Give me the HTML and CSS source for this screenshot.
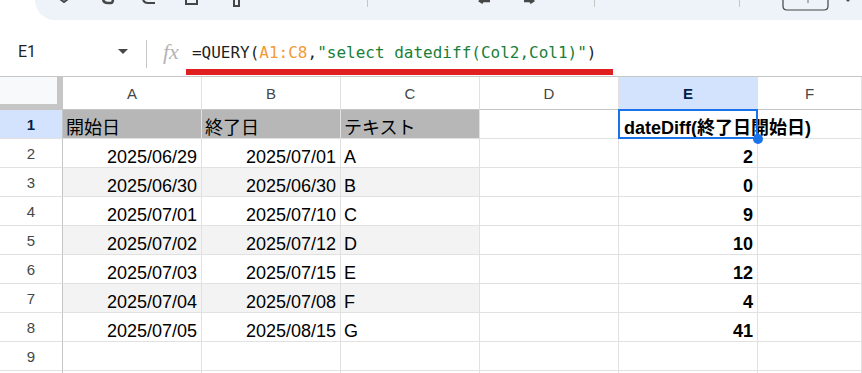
FILE: index.html
```html
<!DOCTYPE html>
<html lang="ja">

<head>
  <meta charset="UTF-8" />
  <meta name="viewport" content="width=device-width, initial-scale=1.0" />
  <title>QUERY datediff</title>
  <link rel="stylesheet" href="styles.css">
</head>

<body>
  <!-- toolbar, only its lower edge is in view -->
  <div class="toolbar">
    <svg class="tool-icons" width="827" height="20" viewBox="0 0 827 20">
      <g fill="none" stroke="#444746" stroke-width="2">
        <path d="M25 -1 L29 2 L33 -1" />
        <path d="M68 -2 Q68 3 73 3 L76 3 Q78 3 78 -2" stroke-width="2.6" />
        <path d="M108 -2 Q108 3 113 3 L120 3" />
        <path d="M151 -3 L151 4 L162 4 L162 -3" />
        <rect x="199" y="-3" width="5" height="9" />
        <path d="M447 -1 L445 1 L448 3 M445 1 L455 1" stroke-width="2.4" />
        <path d="M498 1 L489 1 M495 -1 L498 1 L495 3" stroke-width="2.4" />
        <path d="M748 -10 L748 6 Q748 10 752 10 L789 10 Q793 10 793 6 L793 -10" stroke-width="1.2" />
      </g>
      <g fill="#c4c7c5">
        <rect x="332" y="0" width="1" height="7" />
        <rect x="559" y="0" width="1" height="7" />
        <rect x="704" y="0" width="1" height="7" />
      </g>
      <rect x="772" y="0" width="2" height="3" fill="#b0b0b0" />
      <circle cx="813" cy="0" r="1.6" fill="#444746" />
    </svg>
    <span class="zoom-level">100%</span>
  </div>

  <div class="formula-bar">
    <div class="name-box">
      <span>E1</span>
      <span class="caret"></span>
    </div>
    <div class="divider"></div>
    <div class="fx">fx</div>
    <div class="formula">
      =QUERY(<span class="ref">A1:C8</span>,<span class="str">"select datediff(Col2,Col1)"</span>)
      <span class="mark"></span>
    </div>
  </div>

  <div class="sheet">
    <div class="corner"></div>
    <div class="col-head">A</div>
    <div class="col-head">B</div>
    <div class="col-head">C</div>
    <div class="col-head">D</div>
    <div class="col-head active">E</div>
    <div class="col-head">F</div>

    <div class="row-head active">1</div>
    <div class="cell head">開始日</div>
    <div class="cell head">終了日</div>
    <div class="cell head">テキスト</div>
    <div class="cell"></div>
    <div class="cell selected">dateDiff(終了日開始日)</div>
    <div class="cell"></div>

    <div class="row-head">2</div>
    <div class="cell num">2025/06/29</div>
    <div class="cell num">2025/07/01</div>
    <div class="cell">A</div>
    <div class="cell"></div>
    <div class="cell val">2</div>
    <div class="cell"></div>

    <div class="row-head">3</div>
    <div class="cell num alt">2025/06/30</div>
    <div class="cell num alt">2025/06/30</div>
    <div class="cell alt">B</div>
    <div class="cell"></div>
    <div class="cell val">0</div>
    <div class="cell"></div>

    <div class="row-head">4</div>
    <div class="cell num">2025/07/01</div>
    <div class="cell num">2025/07/10</div>
    <div class="cell">C</div>
    <div class="cell"></div>
    <div class="cell val">9</div>
    <div class="cell"></div>

    <div class="row-head">5</div>
    <div class="cell num alt">2025/07/02</div>
    <div class="cell num alt">2025/07/12</div>
    <div class="cell alt">D</div>
    <div class="cell"></div>
    <div class="cell val">10</div>
    <div class="cell"></div>

    <div class="row-head">6</div>
    <div class="cell num">2025/07/03</div>
    <div class="cell num">2025/07/15</div>
    <div class="cell">E</div>
    <div class="cell"></div>
    <div class="cell val">12</div>
    <div class="cell"></div>

    <div class="row-head">7</div>
    <div class="cell num alt">2025/07/04</div>
    <div class="cell num alt">2025/07/08</div>
    <div class="cell alt">F</div>
    <div class="cell"></div>
    <div class="cell val">4</div>
    <div class="cell"></div>

    <div class="row-head">8</div>
    <div class="cell num">2025/07/05</div>
    <div class="cell num">2025/08/15</div>
    <div class="cell">G</div>
    <div class="cell"></div>
    <div class="cell val">41</div>
    <div class="cell"></div>

    <div class="row-head">9</div>
    <div class="cell"></div>
    <div class="cell"></div>
    <div class="cell"></div>
    <div class="cell"></div>
    <div class="cell"></div>
    <div class="cell"></div>

    <div class="row-head"></div>
    <div class="cell"></div>
    <div class="cell"></div>
    <div class="cell"></div>
    <div class="cell"></div>
    <div class="cell"></div>
    <div class="cell"></div>
  </div>
</body>

</html>
```

FILE: styles.css
```css
body {
  margin: 0;
  background: #fff;
  font-family: "Liberation Sans", Arial, "Noto Sans CJK JP", sans-serif;
  color: #000;
  overflow: hidden;
}

/* top toolbar (cut off) */
.toolbar {
  position: relative;
  height: 20px;
  margin-left: 35px;
  background-color: #eef2f9;
  border-bottom-left-radius: 20px;
  overflow: hidden;
}

.tool-icons {
  display: block;
}

.zoom-level {
  position: absolute;
  left: 235px;
  top: -12px;
  font-family: Roboto, sans-serif;
  font-size: 15px;
  line-height: 15px;
  color: #444746;
}

/* formula bar */
.formula-bar {
  display: flex;
  align-items: flex-start;
  height: 56px;
}

.name-box {
  display: flex;
  align-items: flex-start;
  width: 146px;
  box-sizing: border-box;
  padding-left: 18px;
  padding-right: 18px;
  margin-top: 22px;
  font-family: Roboto, sans-serif;
  font-size: 16px;
  color: #1f1f1f;
}

.caret {
  margin-left: auto;
  margin-top: 7px;
  width: 0;
  height: 0;
  border-left: 5px solid transparent;
  border-right: 5px solid transparent;
  border-top: 5px solid #444746;
}

.divider {
  width: 1px;
  height: 28px;
  margin-top: 20px;
  background-color: #c4c7c5;
}

.fx {
  margin-top: 20px;
  margin-left: 16px;
  font-family: "Liberation Serif", serif;
  font-style: italic;
  font-size: 22px;
  line-height: 24px;
  color: #b4b4b4;
}

.formula {
  position: relative;
  margin-top: 23px;
  margin-left: 13px;
  font-family: "DejaVu Sans Mono", monospace;
  font-size: 16px;
  line-height: 19px;
  color: #1f1f1f;
  white-space: nowrap;
}

.formula .ref {
  color: #f29b38;
}

.formula .str {
  color: #188038;
}

/* red highlight line under the formula */
.formula .mark {
  position: absolute;
  left: -6px;
  top: 26px;
  width: 427px;
  height: 6px;
  background-color: #e0201f;
}

/* grid */
.sheet {
  display: grid;
  grid-template-columns: 63px repeat(5, 139px) 1fr;
  grid-template-rows: 33px;
  grid-auto-rows: 29px;
  border-top: 1px solid #c4c7c5;
}

.sheet > div {
  box-sizing: border-box;
}

.corner {
  background-color: #f8f9fa;
  border-right: 6px solid #c6c6c6;
  border-bottom: 6px solid #c6c6c6;
}

.col-head {
  display: flex;
  align-items: center;
  justify-content: center;
  font-size: 15px;
  color: #444746;
  border-right: 1px solid #e1e1e1;
  border-bottom: 1px solid #c4c7c5;
}

.row-head {
  display: flex;
  align-items: center;
  justify-content: center;
  font-size: 15px;
  color: #444746;
  border-right: 1px solid #c4c7c5;
  border-bottom: 1px solid #e1e1e1;
}

.col-head.active,
.row-head.active {
  background-color: #d3e3fd;
  color: #041e49;
  font-weight: bold;
}

.cell {
  padding: 8px 4px 0 3px;
  font-size: 18px;
  line-height: 20px;
  white-space: nowrap;
  overflow: hidden;
  border-right: 1px solid #e1e1e1;
  border-bottom: 1px solid #e1e1e1;
}

.cell.head {
  background-color: #b7b7b7;
}

.cell.alt {
  background-color: #f3f3f3;
}

.cell.num {
  text-align: right;
}

.cell.val {
  text-align: right;
  font-weight: bold;
}

.cell.selected {
  position: relative;
  z-index: 2;
  overflow: visible;
  padding-left: 5px;
  font-weight: bold;
}

.cell.selected::before {
  content: "";
  position: absolute;
  top: -1px;
  left: -1px;
  right: -1px;
  bottom: -1px;
  border: 2px solid #1a73e8;
}

.cell.selected::after {
  content: "";
  position: absolute;
  right: -6px;
  bottom: -6px;
  width: 10px;
  height: 10px;
  border-radius: 50%;
  background-color: #1a73e8;
}
```
